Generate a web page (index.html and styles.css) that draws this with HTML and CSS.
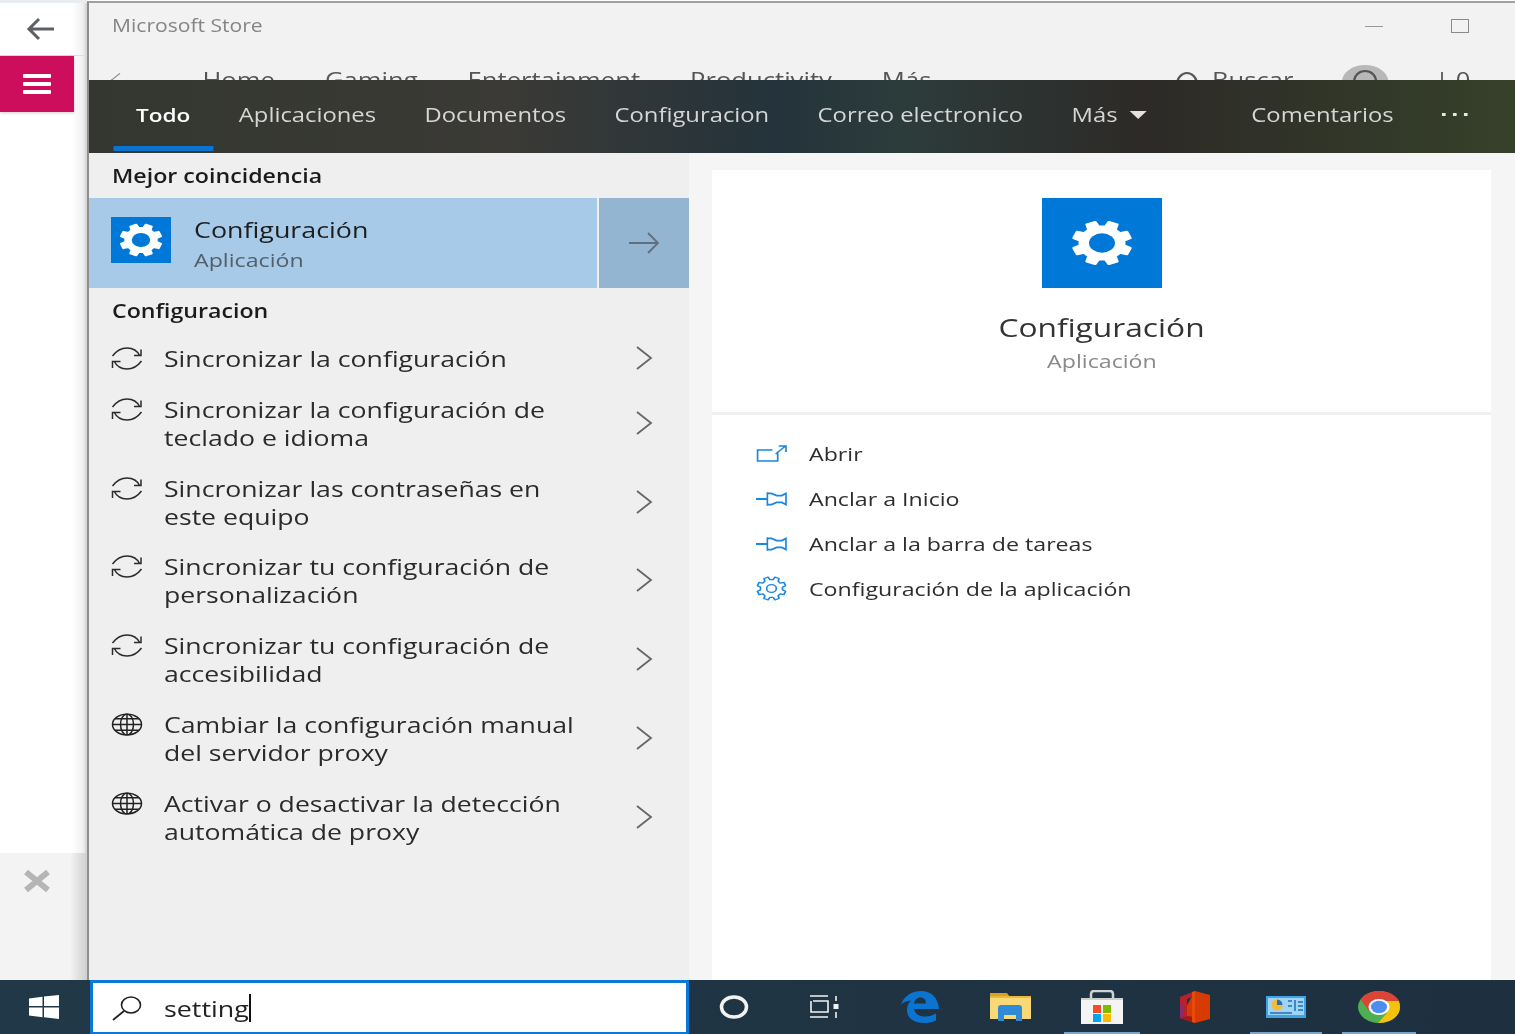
FILE: index.html
```html
<!DOCTYPE html>
<html lang="es">
<head>
    <meta charset="UTF-8">
    <title>Microsoft Store - Buscar</title>
    <link rel="stylesheet" href="styles.css">
</head>
<body>

    <svg class="defs" width="0" height="0">
        <symbol id="gear" viewBox="0 0 32 32" preserveAspectRatio="none">
            <polygon fill="#fff" stroke="#fff" stroke-width="1.500" stroke-linejoin="round" points="27.37,17.7 30.59,19.5 28.79,23.84 25.24,22.84 22.84,25.24 23.84,28.79 19.5,30.59 17.7,27.37 14.3,27.37 12.5,30.59 8.16,28.79 9.16,25.24 6.76,22.84 3.21,23.84 1.41,19.5 4.63,17.7 4.63,14.3 1.41,12.5 3.21,8.16 6.76,9.16 9.16,6.76 8.16,3.21 12.5,1.41 14.3,4.63 17.7,4.63 19.5,1.41 23.84,3.21 22.84,6.76 25.24,9.16 28.79,8.16 30.59,12.5 27.37,14.3"/>
            <circle cx="16" cy="16" r="6.700" fill="#0078d7"/>
        </symbol>
        <symbol id="sync" viewBox="0 0 32 23" preserveAspectRatio="none">
            <path d="M1.500 9C6 3 11 1 16 1c6 0 10 2 13 8M30 2.500V8.500h-7M30.500 14C26 20 21 22 16 22c-6 0-10-2-13-8M1.500 21V14.500h8" fill="none" stroke="#2b2b2b" stroke-width="1.500"/>
        </symbol>
        <symbol id="globe" viewBox="0 0 32 24" preserveAspectRatio="none">
            <g fill="none" stroke="#222" stroke-width="1.500">
                <ellipse cx="16" cy="12" rx="14.500" ry="10.800"/>
                <ellipse cx="16" cy="12" rx="6.500" ry="10.800"/>
                <path d="M16 1v22M1.500 12h29M4 6h24M4 18h24"/>
            </g>
        </symbol>
        <symbol id="chevron" viewBox="0 0 18 24" preserveAspectRatio="none">
            <path d="M2 1l14 11L2 23" fill="none" stroke="#666" stroke-width="1.800"/>
        </symbol>
        <symbol id="pin" viewBox="0 0 30 16" preserveAspectRatio="none">
            <path d="M0 8h11M11 2v12M11 3h4l5 2h5l4-2v10l-4-2h-5l-5 2h-4" fill="none" stroke="#1a86df" stroke-width="1.600"/>
        </symbol>
    </svg>

    <div class="desktop">
        <aside class="side">
            <div class="side-top">
                <svg width="30" height="24" viewBox="0 0 30 24"><path d="M28 12H3M13 2L3 12l10 10" fill="none" stroke="#5d6166" stroke-width="3"/></svg>
            </div>
            <div class="menu-btn">
                <span></span><span></span><span></span>
            </div>
            <div class="side-fill"></div>
            <div class="side-foot">
                <svg width="28" height="24" viewBox="0 0 28 24"><path d="M3 3l22 18M25 3L3 21" stroke="#b5b5b5" stroke-width="6"/></svg>
            </div>
        </aside>

        <div class="window">
            <div class="store-title">
                <span class="store-name">Microsoft Store</span>
                <div class="win-btns">
                    <span class="win-min"></span>
                    <span class="win-max"></span>
                </div>
            </div>
            <div class="store-nav">
                <div class="nav-inner">
                    <span class="nav-back"></span>
                    <span class="nav-home">Home</span>
                    <span>Gaming</span>
                    <span>Entertainment</span>
                    <span>Productivity</span>
                    <span>Más</span>
                    <span class="nav-search"><i></i>Buscar</span>
                    <span class="nav-avatar"><i></i></span>
                    <span class="nav-count">| 0</span>
                </div>
            </div>

            <div class="tabs">
                <div class="tabs-inner">
                    <a class="tab active">Todo</a>
                    <a class="tab">Aplicaciones</a>
                    <a class="tab">Documentos</a>
                    <a class="tab">Configuracion</a>
                    <a class="tab">Correo electronico</a>
                    <a class="tab">Más<i class="caret"></i></a>
                    <a class="tab feedback">Comentarios</a>
                    <a class="tab dots"><b></b><b></b><b></b></a>
                </div>
            </div>

            <div class="results">
                <section class="list-pane">
                    <h2 class="group-title"><span>Mejor coincidencia</span></h2>
                    <div class="best">
                        <div class="best-main">
                            <div class="tile-small"><svg><use href="#gear"/></svg></div>
                            <div class="best-text">
                                <div class="best-name">Configuración</div>
                                <div class="best-kind">Aplicación</div>
                            </div>
                        </div>
                        <div class="best-arrow">
                            <svg width="32" height="24" viewBox="0 0 32 24"><path d="M1 12h29M20 2l10 10-10 10" fill="none" stroke="#5f6f7d" stroke-width="1.800"/></svg>
                        </div>
                    </div>
                    <h2 class="group-title second"><span>Configuracion</span></h2>
                    <div class="rows">
                        <div class="row">
                            <svg class="row-icon"><use href="#sync"/></svg>
                            <div class="row-text">Sincronizar la configuración</div>
                            <svg class="row-chev"><use href="#chevron"/></svg>
                        </div>
                        <div class="row">
                            <svg class="row-icon"><use href="#sync"/></svg>
                            <div class="row-text">Sincronizar la configuración de<br>teclado e idioma</div>
                            <svg class="row-chev"><use href="#chevron"/></svg>
                        </div>
                        <div class="row">
                            <svg class="row-icon"><use href="#sync"/></svg>
                            <div class="row-text">Sincronizar las contraseñas en<br>este equipo</div>
                            <svg class="row-chev"><use href="#chevron"/></svg>
                        </div>
                        <div class="row">
                            <svg class="row-icon"><use href="#sync"/></svg>
                            <div class="row-text">Sincronizar tu configuración de<br>personalización</div>
                            <svg class="row-chev"><use href="#chevron"/></svg>
                        </div>
                        <div class="row">
                            <svg class="row-icon"><use href="#sync"/></svg>
                            <div class="row-text">Sincronizar tu configuración de<br>accesibilidad</div>
                            <svg class="row-chev"><use href="#chevron"/></svg>
                        </div>
                        <div class="row">
                            <svg class="row-icon"><use href="#globe"/></svg>
                            <div class="row-text">Cambiar la configuración manual<br>del servidor proxy</div>
                            <svg class="row-chev"><use href="#chevron"/></svg>
                        </div>
                        <div class="row">
                            <svg class="row-icon"><use href="#globe"/></svg>
                            <div class="row-text">Activar o desactivar la detección<br>automática de proxy</div>
                            <svg class="row-chev"><use href="#chevron"/></svg>
                        </div>
                    </div>
                </section>

                <section class="detail-pane">
                    <div class="card">
                        <div class="card-head">
                            <div class="tile-big"><svg><use href="#gear"/></svg></div>
                            <div class="card-name">Configuración</div>
                            <div class="card-kind">Aplicación</div>
                        </div>
                        <div class="actions">
                            <div class="action">
                                <svg class="action-icon" viewBox="0 0 30 18" preserveAspectRatio="none"><path d="M21 6.500V16H1.500V5H16M19 9l9-7.500M22 1h7v6" fill="none" stroke="#1a86df" stroke-width="1.600"/></svg>
                                <span>Abrir</span>
                            </div>
                            <div class="action">
                                <svg class="action-icon"><use href="#pin"/></svg>
                                <span>Anclar a Inicio</span>
                            </div>
                            <div class="action">
                                <svg class="action-icon"><use href="#pin"/></svg>
                                <span>Anclar a la barra de tareas</span>
                            </div>
                            <div class="action">
                                <svg class="action-icon tall" viewBox="0 0 32 32" preserveAspectRatio="none">
                                    <polygon fill="none" stroke="#1a86df" stroke-width="1.700" stroke-linejoin="round" points="27.37,17.7 30.59,19.5 28.79,23.84 25.24,22.84 22.84,25.24 23.84,28.79 19.5,30.59 17.7,27.37 14.3,27.37 12.5,30.59 8.16,28.79 9.16,25.24 6.76,22.84 3.21,23.84 1.41,19.5 4.63,17.7 4.63,14.3 1.41,12.5 3.21,8.16 6.76,9.16 9.16,6.76 8.16,3.21 12.5,1.41 14.3,4.63 17.7,4.63 19.5,1.41 23.84,3.21 22.84,6.76 25.24,9.16 28.79,8.16 30.59,12.5 27.37,14.3"/>
                                    <circle cx="16" cy="16" r="5" fill="none" stroke="#1a86df" stroke-width="1.700"/>
                                </svg>
                                <span>Configuración de la aplicación</span>
                            </div>
                        </div>
                    </div>
                </section>
            </div>
        </div>
    </div>

    <footer class="taskbar">
        <div class="start">
            <svg width="30" height="24" viewBox="0 0 30 24"><path d="M0 3.500L13.500 1.800V11H0zM15 1.600L30 0V11H15zM0 12.500h13.500v9.700L0 20.500zM15 12.500h15V24l-15-1.800z" fill="#fff"/></svg>
        </div>
        <div class="searchbox">
            <svg width="32" height="26" viewBox="0 0 32 26"><ellipse cx="20" cy="10" rx="9.500" ry="8" fill="none" stroke="#222" stroke-width="1.600"/><path d="M13 16L2 25" stroke="#222" stroke-width="1.800"/></svg>
            <span class="search-text">setting</span><span class="search-caret"></span>
        </div>
        <div class="tray">
            <div class="tray-item cortana"><svg width="30" height="24" viewBox="0 0 30 24"><ellipse cx="15" cy="12" rx="12.500" ry="10" fill="none" stroke="#f2f2f2" stroke-width="3.500"/></svg></div>
            <div class="tray-item taskview">
                <svg width="30" height="24" viewBox="0 0 30 24"><path d="M1 1h18M4 6h15v11H2V6M1 22h18M27 1v5M27 17v6" fill="none" stroke="#f2f2f2" stroke-width="1.600"/><rect x="24.500" y="9" width="5" height="5" fill="#f2f2f2"/></svg>
            </div>
            <div class="tray-item edge">
                <svg width="38" height="32" viewBox="0 0 38 32"><path fill-rule="evenodd" fill="#0a74d0" d="M0 14C3 4 12 0 20 0c10 0 17 6 18 18H13c.5 5 6 7.500 11 7.500 4 0 8-1.200 11-3v7c-4 2-8 2.500-12 2.500-9 0-17-4-17-13 0-4 1.500-7 4-9.500C6 10 2 11 0 14zM13 12.500h12c0-4-2.500-6-5.500-6-3.500 0-6 2.500-6.500 6z"/></svg>
            </div>
            <div class="tray-item folder">
                <svg width="42" height="32" viewBox="0 0 42 32"><path d="M0 2h17l3 4H0z" fill="#d9a11f"/><rect y="5" width="41" height="23" fill="#f9d976"/><rect y="5" width="41" height="2" fill="#eab93b"/><path d="M8 30V17c0-2 1-3 3-3h18c2 0 3 1 3 3v13h-6v-6H14v6z" fill="#2f8bd6"/><rect x="14" y="24" width="12" height="4" fill="#f9d976"/></svg>
            </div>
            <div class="tray-item store">
                <svg width="44" height="34" viewBox="0 0 44 34"><path d="M11 9V4c0-2 1-3 3-3h16c2 0 3 1 3 3v5" fill="none" stroke="#cfd3d6" stroke-width="2.500"/><path d="M1 9h42v25H1z" fill="#f4f4f4"/><rect x="1" y="8" width="42" height="2" fill="#cfcfcf"/><rect x="13" y="15" width="8" height="8" fill="#f25022"/><rect x="23" y="15" width="8" height="8" fill="#7fba00"/><rect x="13" y="24" width="8" height="8" fill="#00a4ef"/><rect x="23" y="24" width="8" height="8" fill="#ffb900"/></svg>
            </div>
            <div class="tray-item office">
                <svg width="36" height="34" viewBox="0 0 36 34"><path d="M19 1l15 4v24l-15 4-15-5z" fill="#d83b01"/><path d="M19 1L4 7v21l7-2V9l8-3z" fill="#b7222a"/><path d="M4 28l15 5v-6l-8-1z" fill="#a5161e"/><path d="M19 1v32l-3-1V2z" fill="#e64a0d"/><path d="M4 16v12l4-2V13z" fill="#8c2a6e"/></svg>
            </div>
            <div class="tray-item panel">
                <svg width="40" height="22" viewBox="0 0 40 22"><rect width="40" height="22" fill="#3da2e6"/><rect x="2" y="2" width="36" height="17" fill="#9fd4f5"/><circle cx="11" cy="9" r="5.500" fill="#f5b93a"/><path d="M11 9V3.500a5.500 5.500 0 0 1 5.500 5.500z" fill="#2b6fb5"/><path d="M22 5h4M29 4v11M32 6h5M32 10h5M32 14h5M22 10h4M4 17h22" stroke="#1f6fb5" stroke-width="1.500"/></svg>
            </div>
            <div class="tray-item chrome">
                <svg width="42" height="32" viewBox="0 0 42 32">
                    <ellipse cx="21" cy="16" rx="21" ry="16" fill="#4caf50"/>
                    <path d="M21 0C13 0 6 3.500 2.500 8.500L11 20l10-10h20C38 4 30 0 21 0z" fill="#db4437"/>
                    <path d="M41 10H21l8 12-9 10h1c12 0 21-7 21-16 0-2-.3-4-1-6z" fill="#f4c20d"/>
                    <ellipse cx="21" cy="16" rx="10.500" ry="8" fill="#fff"/>
                    <ellipse cx="21" cy="16" rx="8" ry="6.200" fill="#4d8df0"/>
                </svg>
            </div>
        </div>
    </footer>

</body>
</html>
```

FILE: styles.css
```css
* {
    box-sizing: border-box;
}
html, body {
    margin: 0;
    padding: 0;
    height: 100%;
}
body {
    width: 1515px;
    height: 1034px;
    overflow: hidden;
    display: flex;
    flex-direction: column;
    font-family: "Open Sans", "Noto Sans", sans-serif;
    color: #2b2b2b;
    background-color: #fff;
    filter: blur(0.4px);
}
.defs {
    position: absolute;
}
.desktop {
    flex: 1;
    display: flex;
    min-height: 0;
}

/* the capture is stretched sideways, so the text is too */
.store-name,
.group-title span,
.best-name,
.best-kind,
.action span,
.search-text,
.tabs-inner,
.nav-inner {
    transform: scaleX(1.22);
    transform-origin: left center;
}
.row-text {
    transform: scaleX(1.21);
    transform-origin: left center;
}
.card-name,
.card-kind {
    transform: scaleX(1.22);
}

/* app behind, left strip */
.side {
    width: 87px;
    display: flex;
    flex-direction: column;
    background: linear-gradient(to right, #fff 72px, #f1f1f1 83px, #cfcfcf 87px);
}
.side-top {
    height: 56px;
    padding-left: 26px;
    display: flex;
    align-items: center;
    border-top: 3px solid #e9edf0;
    border-bottom: 1px solid #dedede;
}
.menu-btn {
    width: 74px;
    height: 56px;
    background-color: #cc0e5c;
    display: flex;
    flex-direction: column;
    align-items: center;
    justify-content: center;
    gap: 4px;
    box-shadow: 0 1px 3px rgba(0, 0, 0, 0.2);
}
.menu-btn span {
    width: 28px;
    height: 4px;
    border-radius: 1px;
    background-color: #fff;
}
.side-fill {
    flex: 1;
}
.side-foot {
    height: 127px;
    padding: 16px 0 0 23px;
    background: linear-gradient(to right, #f3f3f3 70px, #cfcfcf 87px);
}

/* store window */
.window {
    flex: 1;
    display: flex;
    flex-direction: column;
    min-width: 0;
    margin-top: 1px;
    border-top: 2px solid #a0a0a0;
    border-left: 2px solid #8f8f8f;
}
.store-title {
    height: 77px;
    display: flex;
    justify-content: space-between;
    background-color: #f2f2f2;
    padding: 11px 46px 0 23px;
}
.store-name {
    font-size: 17.300px;
    line-height: 24px;
    color: #858585;
}
.win-btns {
    display: flex;
    gap: 68px;
    padding-top: 5px;
}
.win-min {
    width: 18px;
    height: 1px;
    margin-top: 7px;
    background-color: #999;
}
.win-max {
    width: 18px;
    height: 14px;
    border: 1.500px solid #8a8a8a;
}
/* nav row of the store, almost hidden under the flyout */
.store-nav {
    height: 16px;
    margin-top: -16px;
    padding-top: 8px;
    overflow: hidden;
}
.nav-inner {
    width: 1169px;
    display: flex;
    gap: 41px;
    padding-left: 20px;
    font-size: 21px;
    line-height: 16px;
    color: #555;
}
.nav-back {
    width: 10px;
    height: 10px;
    margin-top: 3px;
    margin-right: 22px;
    border-left: 1px solid #888;
    border-top: 1px solid #888;
    transform: rotate(-45deg);
}
.nav-search {
    margin-left: 160px;
    display: flex;
    gap: 11px;
}
.nav-search i {
    width: 18px;
    height: 24px;
    border: 2px solid #555;
    border-radius: 50%;
}
.nav-avatar {
    width: 38px;
    height: 34px;
    margin-left: -1px;
    margin-top: -7px;
    padding: 5px 0 0 9px;
    border-radius: 50%;
    background-color: #b8b8b8;
}
.nav-avatar i {
    display: block;
    width: 20px;
    height: 22px;
    border: 2px solid #555;
    border-radius: 50%;
}
.nav-count {
    margin-left: -3px;
}

/* search flyout */
.tabs {
    height: 73px;
    background: linear-gradient(to right, #33372f 0, #3b3a36 29%, #24333b 48%, #2c3c3b 57%, #2d2a27 74%, #36412a 100%);
}
.tabs-inner {
    width: 1169px;
    height: 100%;
    display: flex;
    align-items: stretch;
    gap: 2px;
    padding-left: 19.700px;
}
.tab {
    display: flex;
    align-items: center;
    padding: 3px 18.850px 0;
    margin-bottom: 2px;
    font-size: 19.500px;
    color: #d6d6d6;
    border-bottom: 5px solid transparent;
}
.tab.active {
    color: #fff;
    font-size: 18.500px;
    font-weight: 600;
    border-bottom-color: #0a74d0;
}
.caret {
    margin-left: 10px;
    border-left: 7.500px solid transparent;
    border-right: 7.500px solid transparent;
    border-top: 8px solid #e2e2e2;
}
.feedback {
    margin-left: 46px;
}
.dots {
    gap: 6px;
    margin-left: 0;
}
.dots b {
    width: 3px;
    height: 3px;
    background-color: #e6e6e6;
}
.results {
    flex: 1;
    display: flex;
    min-height: 0;
}
.list-pane {
    width: 600px;
    background-color: #efefef;
}
.group-title {
    margin: 0;
    height: 45px;
    padding: 11px 0 0 23px;
    font-size: 19px;
    line-height: 24px;
    font-weight: 600;
    color: #1b1b1b;
}
.group-title span {
    display: inline-block;
}
.group-title.second {
    height: 56px;
}
.best {
    height: 90px;
    display: flex;
}
.best-main {
    width: 508px;
    display: flex;
    align-items: center;
    gap: 23px;
    padding-left: 22px;
    background-color: #a6cae8;
}
.tile-small {
    width: 60px;
    height: 46px;
    margin-top: -6px;
    padding: 6px 8px;
    background-color: #0078d7;
}
.tile-small svg,
.tile-big svg {
    display: block;
    width: 100%;
    height: 100%;
}
.best-text {
    margin-top: 2px;
}
.best-name {
    font-size: 22px;
    line-height: 30px;
    color: #1d1d1d;
}
.best-kind {
    margin-top: 1px;
    font-size: 19px;
    line-height: 30px;
    color: #555f68;
}
.best-arrow {
    flex: 1;
    margin-left: 2px;
    display: flex;
    align-items: center;
    justify-content: center;
    background-color: #94b5d2;
}
.rows {
    display: flex;
    flex-direction: column;
    gap: 22.750px;
}
.row {
    display: flex;
    align-items: flex-start;
    padding: 0 36px 0 22px;
}
.row-icon {
    flex: none;
    width: 32px;
    height: 23px;
    margin-top: 3px;
}
.row-text {
    flex: 1;
    margin-left: 21px;
    font-size: 22px;
    line-height: 28px;
    color: #2b2b2b;
}
.row-chev {
    flex: none;
    width: 18px;
    height: 24px;
    align-self: center;
}
.detail-pane {
    flex: 1;
    padding: 17px 24px 0 23px;
    background-color: #f5f5f5;
}
.card {
    height: 100%;
    background-color: #fff;
}
.card-head {
    height: 245px;
    padding-top: 28px;
    display: flex;
    flex-direction: column;
    align-items: center;
    border-bottom: 3px solid #f0f0f0;
}
.tile-big {
    width: 120px;
    height: 90px;
    padding: 22px 29px;
    background-color: #0078d7;
}
.card-name {
    margin-top: 21px;
    font-size: 26px;
    line-height: 36px;
    color: #333;
}
.card-kind {
    margin-top: 1px;
    font-size: 19px;
    line-height: 30px;
    color: #8a8a8a;
}
.actions {
    padding: 16px 0 0 44px;
}
.action {
    height: 45px;
    display: flex;
    align-items: center;
    gap: 22px;
    font-size: 19px;
    color: #2e2e2e;
}
.action-icon {
    flex: none;
    width: 31px;
    height: 18px;
}
.action-icon.tall {
    height: 25px;
}

/* taskbar */
.taskbar {
    height: 54px;
    display: flex;
    background: linear-gradient(to right, #203847, #1e3040);
}
.start {
    width: 90px;
    padding-left: 29px;
    display: flex;
    align-items: center;
}
.searchbox {
    width: 599px;
    display: flex;
    align-items: center;
    padding-left: 18px;
    background-color: #fff;
    border: 3px solid #0a78d8;
    border-bottom-width: 2px;
}
.search-text {
    margin-left: 21px;
    font-size: 22px;
    color: #222;
}
.search-caret {
    width: 2px;
    height: 28px;
    margin-left: 15px;
    background-color: #111;
}
.tray {
    flex: 1;
    position: relative;
}
.tray-item {
    position: absolute;
    top: 50%;
    transform: translateY(-50%);
    display: flex;
}
.tray-item svg {
    display: block;
}
.cortana { left: 30px; }
.taskview { left: 120px; }
.edge { left: 212px; }
.folder { left: 301px; }
.store { left: 391px; }
.office { left: 487px; }
.panel { left: 577px; }
.chrome { left: 669px; }
.store::after,
.panel::after,
.chrome::after {
    content: "";
    position: absolute;
    height: 2px;
    left: -16px;
    right: -16px;
    background-color: #7aa4c8;
}
.store::after { top: 42px; }
.panel::after { top: 36px; }
.chrome::after { top: 41px; }
```
